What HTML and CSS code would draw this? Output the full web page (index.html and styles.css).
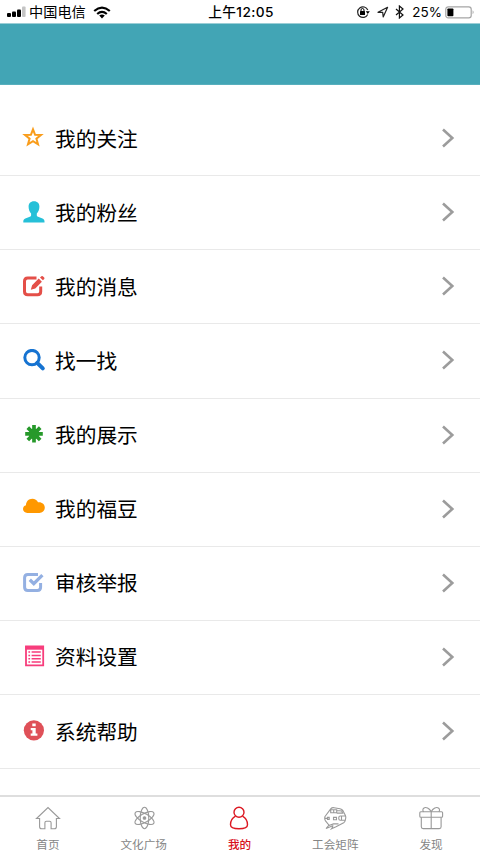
FILE: index.html
```html
<!DOCTYPE html>
<html lang="zh-CN">
<head>
<meta charset="utf-8">
<title>我的</title>
<link rel="stylesheet" href="styles.css">
</head>
<body>
<div class="app">
  <header class="status">
    <div class="status-left">
      <svg class="signal" width="20" height="12" viewBox="0 0 20 12"><rect x="0" y="7" width="4" height="4" rx="1"/><rect x="5" y="5.5" width="4" height="5.5" rx="1"/><rect x="10" y="3.5" width="4" height="7.5" rx="1"/><rect x="15" y="0.5" width="3.6" height="10.5" rx="1" fill="#c4c4c4"/></svg>
      <span class="carrier">中国电信</span>
      <svg class="wifi" width="18" height="13" viewBox="0 0 18 13"><g fill="none" stroke="#000" stroke-width="2.2"><path d="M1.2 5Q9-1.8 16.8 5"/><path d="M4.2 8Q9 3.8 13.8 8"/></g><path d="M6.2 9.6Q9 7.4 11.800 9.600L9 12.400Z"/></svg>
    </div>
    <div class="clock">上午12:05</div>
    <div class="status-right">
      <svg width="14" height="14" viewBox="0 0 14 14"><path d="M11.700 9.500A5.300 5.300 0 1 1 11.800 5" fill="none" stroke="#222" stroke-width="1.200"/><path d="M9.800 6.200h4l-2 2.800z"/><rect x="4" y="6" width="5" height="4" rx=".5"/><path d="M5 6V5a1.500 1.500 0 0 1 3 0v1" fill="none" stroke="#000"/></svg>
      <svg class="locate" width="12" height="12" viewBox="0 0 12 12"><path d="M1 6.300L10.600 1.300 6.200 11 5.700 6.400Z" fill="none" stroke="#222" stroke-width="1.200" stroke-linejoin="round"/></svg>
      <svg class="bluetooth" width="9" height="14" viewBox="0 0 9 14"><path d="M1 4l7 6-3.600 3V1L8 4l-7 6" fill="none" stroke="#111" stroke-width="1.200"/></svg>
      <span class="percent">25%</span>
      <svg width="30" height="13" viewBox="0 0 30 13"><rect x=".8" y=".8" width="25.400" height="11" rx="2.400" fill="none" stroke="#a5a5a5" stroke-width="1.200"/><rect x="2.400" y="2.400" width="6" height="7.800" rx=".8"/><path d="M27.600 4.300q2 2 0 4z" fill="#a5a5a5"/></svg>
    </div>
  </header>
  <div class="banner"></div>
  <main class="menu">
    <a class="row">
      <svg class="icon star" viewBox="0 0 24 24"><path d="M11 3.300l2.100 5.500 5.900.2-4.600 3.600 1.600 5.700-5-3.200-5 3.200 1.600-5.700L3 9l5.900-.2z" fill="none" stroke="#f99d1c" stroke-width="2"/></svg>
      <span class="label">我的关注</span>
      <svg class="chevron" viewBox="0 0 14 20"><path d="M2 1.500L11.300 10 2 18.500"/></svg>
    </a>
    <a class="row">
      <svg class="icon" viewBox="0 0 24 24"><path d="M12 .2c3.600 0 5.400 2.300 5.400 5.500 0 3-1.200 5.200-2.600 6.700v1.800c0 .8.500 1.300 1.300 1.600l4.400 1.700c1.400.6 2 1.500 2 3v1H1.300v-1c0-1.500.7-2.400 2-3l4.500-1.700c.8-.3 1.300-.8 1.300-1.600v-1.800C7.700 10.900 6.600 8.700 6.600 5.700 6.600 2.500 8.400.2 12 .2z" fill="#26c0d8"/></svg>
      <span class="label">我的粉丝</span>
      <svg class="chevron" viewBox="0 0 14 20"><path d="M2 1.500L11.300 10 2 18.500"/></svg>
    </a>
    <a class="row">
      <svg class="icon" viewBox="0 0 24 24"><path d="M14.500 3H5.700Q2.500 3 2.500 6.200v10.400q0 3.200 3.200 3.200h9.800q3.200 0 3.200-3.200v-5.200" fill="none" stroke="#e44f48" stroke-width="3"/><path d="M8.800 14.700l1.300-4.500 6.600-6.600 3.200 3.200-6.600 6.600zM18 2.600l1.400-1.400q.7-.6 1.400 0l1.400 1.400q.6.700 0 1.300l-1.300 1.400z" fill="#e44f48"/></svg>
      <span class="label">我的消息</span>
      <svg class="chevron" viewBox="0 0 14 20"><path d="M2 1.500L11.300 10 2 18.500"/></svg>
    </a>
    <a class="row">
      <svg class="icon" viewBox="0 0 24 24"><g fill="none" stroke="#1673d1"><circle cx="10" cy="8.600" r="7.200" stroke-width="3"/><path d="M15.200 13.800l5.600 5.600" stroke-width="4" stroke-linecap="round"/></g></svg>
      <span class="label">找一找</span>
      <svg class="chevron" viewBox="0 0 14 20"><path d="M2 1.500L11.300 10 2 18.500"/></svg>
    </a>
    <a class="row">
      <svg class="icon" viewBox="0 0 24 24"><g stroke="#26992a" stroke-width="3.700"><path d="M12 2v17.600M3.200 10.800h17.600M5.800 4.600l12.400 12.400M18.200 4.600L5.800 17"/></g><circle cx="12" cy="10.800" r="5.200" fill="#26992a"/></svg>
      <span class="label">我的展示</span>
      <svg class="chevron" viewBox="0 0 14 20"><path d="M2 1.500L11.300 10 2 18.500"/></svg>
    </a>
    <a class="row">
      <svg class="icon" viewBox="0 0 24 24"><path d="M5.300 15.900C2.900 15.900 1 14.200 1 12c0-1.800 1.200-3.300 3-3.700C3.900 4.600 6.700 1.700 10.300 1.700c2.600 0 4.700 1.400 5.700 3.600 3.700-.6 6.800 1.900 6.800 5.200 0 3-2.300 5.400-5.400 5.400z" fill="#ff9800"/></svg>
      <span class="label">我的福豆</span>
      <svg class="chevron" viewBox="0 0 14 20"><path d="M2 1.500L11.300 10 2 18.500"/></svg>
    </a>
    <a class="row">
      <svg class="icon" viewBox="0 0 24 24"><g fill="none" stroke="#94b0e2" stroke-width="3"><path d="M16 3.500H5.800Q2.600 3.500 2.600 6.700v9.600q0 3.200 3.200 3.200h9.600q3.200 0 3.200-3.200v-4.300"/><path d="M7.800 8.800l4 3.900 8.600-8.600" stroke-width="3.300"/></g></svg>
      <span class="label">审核举报</span>
      <svg class="chevron" viewBox="0 0 14 20"><path d="M2 1.500L11.300 10 2 18.500"/></svg>
    </a>
    <a class="row">
      <svg class="icon" viewBox="0 0 24 24"><g fill="none" stroke="#f73d7c"><path d="M4 1.500h17.200v18.900H4z" stroke-width="1.800"/><path d="M6.400 7h1.700M6.400 10.400h1.700M6.400 13.700h1.700M6.400 17h1.700M9.600 7h9.200M9.600 10.400h9.200M9.600 13.700h9.200M9.600 17h9.200" stroke-width="1.500"/></g><path d="M3.200 1h18.800v3.700H3.200z" fill="#f73d7c"/></svg>
      <span class="label">资料设置</span>
      <svg class="chevron" viewBox="0 0 14 20"><path d="M2 1.500L11.300 10 2 18.500"/></svg>
    </a>
    <a class="row">
      <svg class="icon" viewBox="0 0 24 24"><circle cx="11.900" cy="10.300" r="10.100" fill="#df5058"/><path d="M10.300 3.400h3.400v2.800h-3.400zM8.700 8h5v5.600h1.700v2.200H8.700v-2.200h1.700v-3.400H8.700z" fill="#fff"/></svg>
      <span class="label">系统帮助</span>
      <svg class="chevron" viewBox="0 0 14 20"><path d="M2 1.500L11.300 10 2 18.500"/></svg>
    </a>
  </main>
  <nav class="tabs">
    <a class="tab">
      <svg viewBox="0 0 26 24"><path d="M4.600 12.500H1.500L13 1.500l11.500 11h-3.100v8.300q0 2-2 2h-3.300v-6q0-1.500-1.500-1.500h-3.200q-1.500 0-1.500 1.500v6H6.600q-2 0-2-2z"/></svg>
      <span>首页</span>
    </a>
    <a class="tab">
      <svg viewBox="0 0 26 24"><g transform="translate(13.500 12)"><ellipse rx="4.300" ry="10.700"/><ellipse rx="4.300" ry="10.700" transform="rotate(60)"/><ellipse rx="4.300" ry="10.700" transform="rotate(120)"/><circle r="1.300" fill="#999"/></g></svg>
      <span>文化广场</span>
    </a>
    <a class="tab active">
      <svg viewBox="0 0 26 24"><circle cx="13" cy="6.200" r="5"/><path d="M9.500 10.200C6.300 12 4.500 15.200 4.500 18.700c0 3 3.500 4 8.500 4s8.500-1 8.500-4c0-3.500-1.800-6.700-5-8.500"/></svg>
      <span>我的</span>
    </a>
    <a class="tab">
      <svg viewBox="0 0 26 24"><path d="M3 10.500L8.700 2.800Q10 1.400 12 1.700l6 1q2 .4 3.100 2.200l2.200 4.300q.7 1.500.4 3l-.5 2.500q-.3 1.300-1.500 2L14 20.800l-4.500 2q1.500-2 1.300-3L4 22.500l3-3.300-3.500-4.300q-1.300-2-.5-4.400zM8.700 3.800h6v3h-6zM11.700 3.800v3M14.700 4.500l5 .4 1 2.200h-6M2.500 12.400h3M5.500 11.400h1.700v2H5.500zM11.500 11.400h3v2.400h-3zM23.300 10h-5q-1.500 0-1.500 1.500v1.200q0 1.500 1.500 1.500h5M19.500 10v4.200M7 19.500l4.500-1.600h5"/></svg>
      <span>工会矩阵</span>
    </a>
    <a class="tab">
      <svg viewBox="0 0 26 24"><rect x="1.800" y="5.800" width="22.800" height="5.400" rx="1"/><path d="M3.300 11.200v9.600q0 1.800 1.800 1.800h16.200q1.800 0 1.800-1.800v-9.600M13.200 5.800v16.800M13.200 5.800C11.500 2.300 7.800.5 5.700 2.200c-1.200 1-1 2.700-.1 3.600M13.200 5.800C14.900 2.300 18.600.5 20.700 2.200c1.200 1 1 2.700.1 3.600"/></svg>
      <span>发现</span>
    </a>
  </nav>
</div>
</body>
</html>
```

FILE: styles.css
```css
* {
  box-sizing: border-box;
}

body {
  margin: 0;
  background: #fff;
  color: #000;
  font-family: "Liberation Sans", "Noto Sans CJK SC", sans-serif;
}

.app {
  width: 480px;
  height: 853px;
  display: flex;
  flex-direction: column;
  overflow: hidden;
}

.status {
  height: 23px;
  flex: none;
  display: grid;
  grid-template-columns: 1fr auto 1fr;
  align-items: center;
  padding: 1px 5px 0 7px;
  line-height: 22px;
}

.status-left,
.status-right {
  display: flex;
  align-items: center;
}

.status-right {
  justify-content: flex-end;
}

.carrier {
  font-size: 14.2px;
  margin-left: 2px;
}

.wifi {
  margin-left: 7px;
}

.clock {
  font-family: Inter, "Noto Sans CJK SC", sans-serif;
  font-size: 13.7px;
  font-weight: 500;
  letter-spacing: 0.4px;
}

.locate {
  margin-left: 7px;
}

.bluetooth {
  margin-left: 6px;
}

.percent {
  font-family: Inter, sans-serif;
  font-size: 13.5px;
  margin: 0 3px 0 8px;
}

.banner {
  height: 62px;
  flex: none;
  background: #42a5b5;
  border-top: 1px solid #9bced6;
  border-bottom: 1px solid #58afbd;
}

.menu {
  flex: 1;
  padding-top: 17px;
}

.row {
  height: 74.13px;
  display: flex;
  align-items: center;
  padding: 0 25px 0 22px;
  border-bottom: 1px solid #e9e9e9;
}

.icon {
  width: 24px;
  height: 24px;
}

.star {
  margin-bottom: 2px;
}

.label {
  flex: 1;
  margin-left: 9px;
  padding-top: 2px;
  font-size: 20.7px;
  line-height: 30px;
}

.chevron {
  width: 14px;
  height: 20px;
  margin-bottom: 1px;
  fill: none;
  stroke: #9c9c9c;
  stroke-width: 2.6;
}

.tabs {
  height: 58px;
  flex: none;
  display: grid;
  grid-template-columns: repeat(5, 95.8px);
  border-top: 2px solid #dedede;
}

.tab {
  display: flex;
  flex-direction: column;
  align-items: center;
  padding-top: 9px;
  color: #858585;
  font-size: 11.6px;
  line-height: 16px;
}

.tab svg {
  width: 26px;
  height: 24px;
  fill: none;
  stroke: #999;
  stroke-width: 1.1;
}

.tab span {
  margin-top: 7px;
}

.active {
  color: #d8101c;
  font-weight: 500;
}

.tab.active svg {
  stroke: #dc1822;
  stroke-width: 1.4;
}
```
